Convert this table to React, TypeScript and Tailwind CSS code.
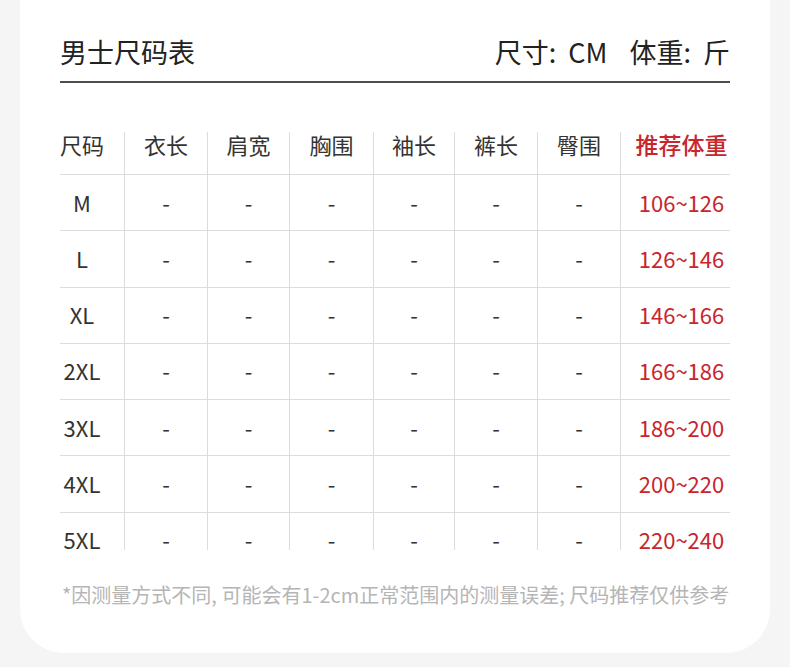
const cols = ["尺码", "衣长", "肩宽", "胸围", "袖长", "裤长", "臀围", "推荐体重"];

const widths = [
  "w-[64px]",
  "w-[83px]",
  "w-[82px]",
  "w-[84px]",
  "w-[81px]",
  "w-[83px]",
  "w-[83px]",
  "w-[110px]",
];

const rows = [
  { size: "M", weight: "106~126" },
  { size: "L", weight: "126~146" },
  { size: "XL", weight: "146~166" },
  { size: "2XL", weight: "166~186" },
  { size: "3XL", weight: "186~200" },
  { size: "4XL", weight: "200~220" },
  { size: "5XL", weight: "220~240" },
];

const SizeRow = ({ size, weight, last }: { size: string; weight: string; last: boolean }) => {
  const cells = [size, "-", "-", "-", "-", "-", "-", weight];
  return (
    <div className={`flex ${last ? "h-[37px]" : "h-[56.3px] border-b border-[#dcdcdc]"}`}>
      {cells.map((c, i) => (
        <div
          key={i}
          className={`${widths[i]} h-full ${i > 0 ? "border-l border-[#dcdcdc]" : ""}`}
        >
          <div
            className={`h-[54px] flex items-center ${
              i === 0 ? "" : "justify-center"
            } ${i === 7 ? "pl-[12px] text-[#c9252c]" : ""}`}
          >
            {i === 0 ? <span className="w-[44px] text-center">{c}</span> : c}
          </div>
        </div>
      ))}
    </div>
  );
};

export default function App() {
  return (
    <div className="w-[790px] h-[667px] bg-[#f5f5f5] font-['Noto_Sans_CJK_SC',sans-serif]">
      <div className="ml-[20px] w-[750px] h-[653px] bg-white rounded-b-[44px] px-[40px]">
        <div className="pt-[34px] pb-[11px] border-b-2 border-[#4d4d4d] flex justify-between items-center text-[27px] leading-[36px] text-[#222]">
          <span>男士尺码表</span>
          <span className="flex gap-[22px]">
            <span className="flex gap-[12px]">
              <span>尺寸:</span>
              <span>CM</span>
            </span>
            <span className="flex gap-[12px]">
              <span>体重:</span>
              <span>斤</span>
            </span>
          </span>
        </div>

        <div className="mt-[49px] text-[22px] text-[#333]">
          <div className="flex h-[43px] border-b border-[#dcdcdc] leading-[24px]">
            {cols.map((c, i) => {
              if (i === 0) {
                return (
                  <div key={c} className={`${widths[i]} h-full`}>
                    <span className="block w-[44px] text-center whitespace-nowrap">{c}</span>
                  </div>
                );
              }
              return (
                <div
                  key={c}
                  className={`${widths[i]} h-full border-l border-[#dcdcdc] text-center whitespace-nowrap ${
                    i === 7 ? "pl-[12px] text-[23px] text-[#c9252c] font-medium" : ""
                  }`}
                >
                  {c}
                </div>
              );
            })}
          </div>
          {rows.map((r, idx) => (
            <SizeRow key={r.size} size={r.size} weight={r.weight} last={idx === rows.length - 1} />
          ))}
        </div>

        <p className="mt-[31px] pl-[2px] text-[20px] leading-[28px] text-[#b5b5b5] whitespace-nowrap">
          *因测量方式不同, 可能会有1-2cm正常范围内的测量误差; 尺码推荐仅供参考
        </p>
      </div>
    </div>
  );
}
